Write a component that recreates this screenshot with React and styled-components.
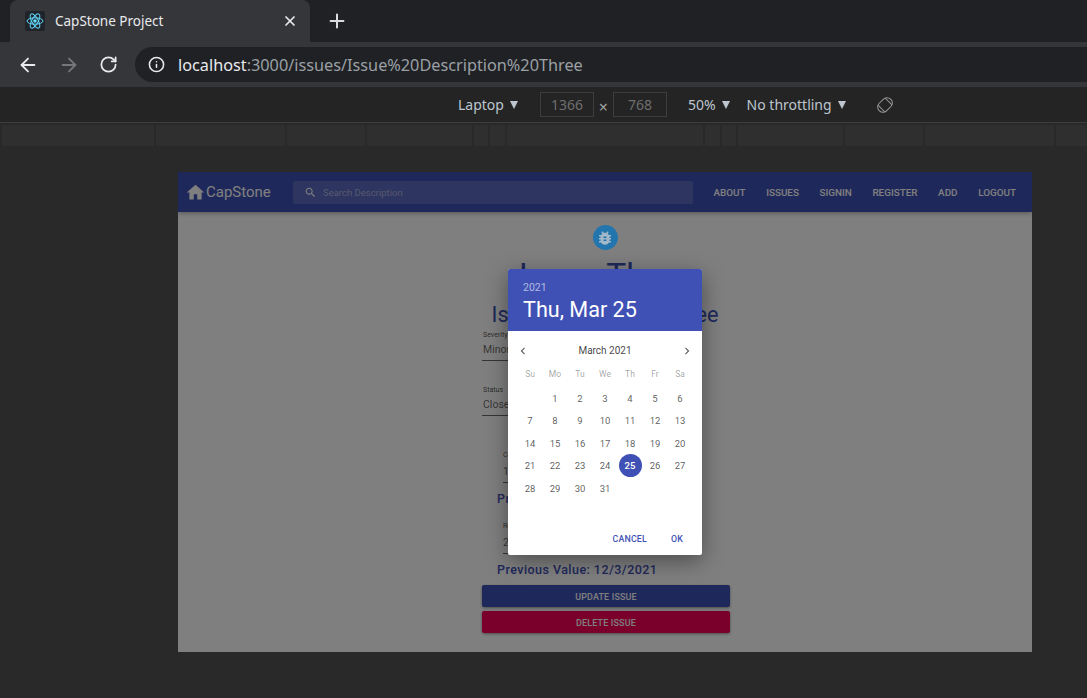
import React from "react";
import styled, { createGlobalStyle } from "styled-components";
import { ArrowLeft, ArrowRight, RotateCw, Info, X, Plus } from "lucide-react";

const rulerWidths = [152, 129, 78, 105, 14, 15, 196, 15, 14, 105, 78, 129, 31];
const navLinks = ["About", "Issues", "Signin", "Register", "Add", "Logout"];
const weekDays = ["Su", "Mo", "Tu", "We", "Th", "Fr", "Sa"];
const leadingBlanks = 1;
const daysInMonth = 31;
const selectedDay = 25;

function App() {
  const cells = [
    ...Array(leadingBlanks).fill(null),
    ...Array.from({ length: daysInMonth }, (_, i) => i + 1),
  ];

  return (
    <Screen>
      <GlobalStyle />
      <TabStrip>
        <Tab>
          <Favicon>
            <svg width="20" height="20" viewBox="0 0 20 20" fill="none" stroke="#61dafb" strokeWidth="1">
              <circle cx="10" cy="10" r="1.8" fill="#61dafb" stroke="none" />
              <ellipse cx="10" cy="10" rx="8" ry="3.2" />
              <ellipse cx="10" cy="10" rx="8" ry="3.2" transform="rotate(60 10 10)" />
              <ellipse cx="10" cy="10" rx="8" ry="3.2" transform="rotate(120 10 10)" />
            </svg>
          </Favicon>
          <TabTitle>CapStone Project</TabTitle>
          <X size={16} strokeWidth={2.6} color="#e8eaed" />
        </Tab>
        <NewTab>
          <Plus size={22} strokeWidth={2.2} color="#dadce0" />
        </NewTab>
      </TabStrip>

      <Toolbar>
        <ArrowLeft size={22} strokeWidth={2} color="#e8eaed" />
        <ArrowRight size={22} strokeWidth={2} color="#75777b" />
        <RotateCw size={19} strokeWidth={2.2} color="#e8eaed" />
        <UrlPill>
          <Info size={17} strokeWidth={2.2} color="#e8eaed" />
          <Url>
            <strong>localhost</strong>:3000/issues/Issue%20Description%20Three
          </Url>
        </UrlPill>
      </Toolbar>

      <DeviceBar>
        <DeviceLabel>Laptop</DeviceLabel>
        <Caret />
        <SizeBox>1366</SizeBox>
        <Times>×</Times>
        <SizeBox>768</SizeBox>
        <DeviceLabel $left={21}>50%</DeviceLabel>
        <Caret />
        <DeviceLabel $left={17}>No throttling</DeviceLabel>
        <Caret />
        <RotateIcon>
          <svg width="18" height="18" viewBox="0 0 18 18" fill="none" stroke="#9a9a9a" strokeWidth="1">
            <g transform="rotate(45 9 9)">
              <rect x="3.75" y="0.9" width="10.5" height="16.2" rx="5" />
              <path d="M4.1 4 13.9 4M4.1 14 13.9 14" />
            </g>
          </svg>
        </RotateIcon>
      </DeviceBar>

      <Ruler>
        {rulerWidths.map((w, i) => (
          <RulerSegment key={i} $width={w} />
        ))}
      </Ruler>

      <Viewport>
        <Page>
          <Navbar>
            <Brand>
              <svg width="21" height="21" viewBox="0 0 24 24" fill="#fff">
                <path d="M10 20v-6h4v6h5v-8h3L12 3 2 12h3v8z" />
              </svg>
              CapStone
            </Brand>
            <SearchBox>
              <svg width="13" height="13" viewBox="0 0 24 24" fill="#fff">
                <path d="M15.5 14h-.79l-.28-.27C15.41 12.59 16 11.11 16 9.5 16 5.91 13.09 3 9.5 3S3 5.91 3 9.5 5.91 16 9.5 16c1.61 0 3.09-.59 4.23-1.57l.27.28v.79l5 4.99L20.49 19l-4.99-5zm-6 0C7.01 14 5 11.99 5 9.5S7.01 5 9.5 5 14 7.01 14 9.5 11.99 14 9.5 14z" />
              </svg>
              <SearchHint>Search Description</SearchHint>
            </SearchBox>
            <NavLinks>
              {navLinks.map((l) => (
                <NavLink key={l}>{l}</NavLink>
              ))}
            </NavLinks>
          </Navbar>

          <Content>
            <BugAvatar>
              <svg width="18" height="18" viewBox="0 0 24 24" fill="#a3b8c8">
                <path d="M20 8h-2.81c-.45-.78-1.07-1.45-1.82-1.96L17 4.41 15.59 3l-2.17 2.17C12.96 5.06 12.49 5 12 5c-.49 0-.96.06-1.41.17L8.41 3 7 4.41l1.62 1.63C7.88 6.55 7.26 7.22 6.81 8H4v2h2.09c-.05.33-.09.66-.09 1v1H4v2h2v1c0 .34.04.67.09 1H4v2h2.81c1.04 1.79 2.97 3 5.19 3s4.15-1.21 5.19-3H20v-2h-2.09c.05-.33.09-.66.09-1v-1h2v-2h-2v-1c0-.34-.04-.67-.09-1H20V8zm-6 8h-4v-2h4v2zm0-4h-4v-2h4v2z" />
              </svg>
            </BugAvatar>
            <Title>Issue Three</Title>
            <Subtitle>Issue Description Three</Subtitle>

            <Form>
              <SelectField>
                <FieldLabel>Severity</FieldLabel>
                <FieldValue>Minor</FieldValue>
              </SelectField>
              <SelectField $top={25}>
                <FieldLabel>Status</FieldLabel>
                <FieldValue>Closed</FieldValue>
              </SelectField>
              <DateGroup $top={35}>
                <DateField>
                  <FieldLabel>Created Date</FieldLabel>
                  <FieldValue>12/3/2021</FieldValue>
                </DateField>
                <PreviousValue>Previous Value: 12/3/2021</PreviousValue>
              </DateGroup>
              <DateGroup $top={15}>
                <DateField>
                  <FieldLabel>Resolved Date</FieldLabel>
                  <FieldValue>25/3/2021</FieldValue>
                </DateField>
                <PreviousValue>Previous Value: 12/3/2021</PreviousValue>
              </DateGroup>
              <ActionButton $bg="#3f51b5" $top={7}>Update Issue</ActionButton>
              <ActionButton $bg="#f50057" $top={4}>Delete Issue</ActionButton>
            </Form>
          </Content>

          <Backdrop>
            <Dialog>
              <DialogHeader>
                <YearText>2021</YearText>
                <DateText>Thu, Mar 25</DateText>
              </DialogHeader>
              <DialogBody>
                <MonthRow>
                  <svg width="14" height="14" viewBox="0 0 24 24" fill="#5f5f5f">
                    <path d="M15.41 7.41L14 6l-6 6 6 6 1.41-1.41L10.83 12z" />
                  </svg>
                  <MonthName>March 2021</MonthName>
                  <svg width="14" height="14" viewBox="0 0 24 24" fill="#5f5f5f">
                    <path d="M10 6L8.59 7.41 13.17 12l-4.58 4.59L10 18l6-6z" />
                  </svg>
                </MonthRow>
                <DayGrid>
                  {weekDays.map((d) => (
                    <WeekDay key={d}>{d}</WeekDay>
                  ))}
                </DayGrid>
                <DayGrid $top={6}>
                  {cells.map((d, i) => (
                    <Day key={i}>
                      {d && <DayNumber $selected={d === selectedDay}>{d}</DayNumber>}
                    </Day>
                  ))}
                </DayGrid>
              </DialogBody>
              <DialogActions>
                <TextButton>Cancel</TextButton>
                <TextButton>OK</TextButton>
              </DialogActions>
            </Dialog>
          </Backdrop>
        </Page>
      </Viewport>
    </Screen>
  );
}

const GlobalStyle = createGlobalStyle`
  html, body {
    margin: 0;
    height: 100%;
    background: #292929;
    overflow: hidden;
  }
  * {
    box-sizing: border-box;
  }
`;

const Screen = styled.div`
  width: 1087px;
  height: 698px;
  display: flex;
  flex-direction: column;
  background: #292929;
  font-family: "Noto Sans", "Open Sans", sans-serif;
  overflow: hidden;
`;

const TabStrip = styled.div`
  height: 42px;
  flex-shrink: 0;
  display: flex;
  align-items: flex-end;
  padding-left: 10px;
  background: #202124;
`;

const Tab = styled.div`
  width: 300px;
  height: 42px;
  display: flex;
  align-items: center;
  padding: 0 12px 0 15px;
  background: #35363a;
  border-radius: 8px 8px 0 0;
`;

const Favicon = styled.div`
  width: 20px;
  height: 20px;
  margin-right: 10px;
  background: #20232a;
  border-radius: 2px;
  display: flex;
`;

const TabTitle = styled.span`
  flex: 1;
  font-size: 13.5px;
  color: #e8eaed;
`;

const NewTab = styled.div`
  height: 42px;
  display: flex;
  align-items: center;
  margin-left: 16px;
`;

const Toolbar = styled.div`
  height: 45px;
  flex-shrink: 0;
  display: flex;
  align-items: center;
  gap: 19px;
  padding: 0 0 0 17px;
  background: #35363a;
`;

const UrlPill = styled.div`
  flex: 1;
  height: 35px;
  margin-left: -2px;
  display: flex;
  align-items: center;
  gap: 13px;
  padding-left: 13px;
  background: #202124;
  border-radius: 18px 0 0 18px;
`;

const Url = styled.span`
  font-size: 16.25px;
  color: #9aa0a6;

  strong {
    font-weight: 400;
    color: #e8eaed;
  }
`;

const DeviceBar = styled.div`
  height: 36px;
  flex-shrink: 0;
  display: flex;
  align-items: center;
  padding-left: 458px;
  background: #242424;
  border-bottom: 1px solid #3d3d3d;
`;

const DeviceLabel = styled.span`
  margin-left: ${(p) => p.$left || 0}px;
  font-size: 14px;
  color: #bdc6cf;
`;

const Caret = styled.span`
  width: 0;
  height: 0;
  margin: 0 0 0 6px;
  border-left: 4.5px solid transparent;
  border-right: 4.5px solid transparent;
  border-top: 8px solid #bdc6cf;
`;

const SizeBox = styled.div`
  width: 54px;
  height: 25px;
  margin-left: 0;
  display: flex;
  align-items: center;
  justify-content: center;
  border: 1px solid #3d3d3d;
  font-size: 14px;
  color: #6e6e6e;

  &:first-of-type {
    margin-left: 22px;
  }
`;

const Times = styled.span`
  width: 19px;
  text-align: center;
  margin-top: 5px;
  font-size: 16px;
  color: #a0a0a0;
`;

const RotateIcon = styled.div`
  display: flex;
  margin-left: 30px;
`;

const Ruler = styled.div`
  height: 23px;
  flex-shrink: 0;
  display: flex;
  gap: 2px;
  padding: 2px 0 0 2px;
  overflow: hidden;
`;

const RulerSegment = styled.div`
  width: ${(p) => p.$width}px;
  flex-shrink: 0;
  background: #2f2f2f;
`;

const Viewport = styled.div`
  flex: 1;
  padding: 26px 55px 0 178px;
`;

const Page = styled.div`
  position: relative;
  width: 854px;
  height: 480px;
  background: #fff;
  overflow: hidden;
  font-family: Roboto, sans-serif;
`;

const Navbar = styled.header`
  height: 40px;
  display: flex;
  align-items: center;
  padding: 0 16px 0 7px;
  background: #3f51b5;
  color: #fff;
  box-shadow: 0 1px 5px rgba(0, 0, 0, 0.35);
`;

const Brand = styled.div`
  width: 108px;
  display: flex;
  align-items: center;
  font-size: 15px;
`;

const SearchBox = styled.div`
  width: 400px;
  height: 23px;
  display: flex;
  align-items: center;
  gap: 6px;
  padding-left: 11px;
  background: rgba(255, 255, 255, 0.15);
  border-radius: 2px;
`;

const SearchHint = styled.span`
  font-size: 9.5px;
  color: rgba(255, 255, 255, 0.5);
`;

const NavLinks = styled.nav`
  margin-left: auto;
  display: flex;
  gap: 20.6px;
`;

const NavLink = styled.span`
  font-size: 9.9px;
  font-weight: 500;
  text-transform: uppercase;
`;

const Content = styled.main`
  display: flex;
  flex-direction: column;
  align-items: center;
  color: #3f51b5;
`;

/* sits above the backdrop in the reference, it is not dimmed */
const BugAvatar = styled.div`
  position: relative;
  z-index: 2;
  width: 25px;
  height: 25px;
  margin-top: 13px;
  display: flex;
  align-items: center;
  justify-content: center;
  border-radius: 50%;
  background: #2376ad;
`;

const Title = styled.h1`
  margin: 6px 0 0;
  font-size: 33.5px;
  line-height: 40px;
  font-weight: 400;
  color: #3f51b5;
`;

const Subtitle = styled.h2`
  margin: 4px 0 0;
  font-size: 21.7px;
  line-height: 30px;
  font-weight: 400;
  color: #3f51b5;
`;

const Form = styled.form`
  width: 248px;
  margin: 1px 0 0 2px;
  display: flex;
  flex-direction: column;
`;

const SelectField = styled.div`
  width: 190px;
  height: 30px;
  margin-top: ${(p) => p.$top || 0}px;
  padding-left: 1px;
  border-bottom: 1px solid #6a6a6a;
`;

const FieldLabel = styled.div`
  font-size: 7px;
  line-height: 9px;
  color: rgba(0, 0, 0, 0.7);
`;

const FieldValue = styled.div`
  margin-top: 3px;
  font-size: 10.5px;
  line-height: 13px;
  color: rgba(0, 0, 0, 0.6);
`;

const DateGroup = styled.div`
  margin-top: ${(p) => p.$top}px;
  padding-left: 15px;
`;

const DateField = styled.div`
  margin-left: 6px;
  width: 190px;
  height: 32px;
  border-bottom: 1px solid #6a6a6a;

  ${FieldValue} {
    margin-top: 5px;
  }
`;

const PreviousValue = styled.div`
  margin-top: 8px;
  font-size: 12.5px;
  line-height: 16px;
  font-weight: 500;
  letter-spacing: 0.45px;
  color: #3f51b5;
`;

const ActionButton = styled.button`
  height: 22px;
  margin-top: ${(p) => p.$top}px;
  padding: 0 0 0 0;
  line-height: 24px;
  border: none;
  border-radius: 2px;
  background: ${(p) => p.$bg};
  color: #fff;
  font-family: Roboto, sans-serif;
  font-size: 8.9px;
  font-weight: 500;
  letter-spacing: 0.2px;
  text-transform: uppercase;
  box-shadow: 0 1px 3px rgba(0, 0, 0, 0.4);
`;

const Backdrop = styled.div`
  position: absolute;
  inset: 0;
  display: flex;
  align-items: center;
  justify-content: center;
  background: rgba(0, 0, 0, 0.5);
`;

const Dialog = styled.div`
  width: 194px;
  height: 286px;
  display: flex;
  flex-direction: column;
  border-radius: 2px;
  overflow: hidden;
  background: #fff;
  box-shadow: 0 6px 22px rgba(0, 0, 0, 0.4);
`;

const DialogHeader = styled.div`
  height: 62px;
  padding: 12px 15px 0;
  background: #3f51b5;
  color: #fff;
`;

const YearText = styled.div`
  font-size: 10.5px;
  line-height: 13px;
  color: rgba(255, 255, 255, 0.6);
`;

const DateText = styled.div`
  margin-top: 1px;
  font-size: 21.6px;
  line-height: 29px;
`;

const DialogBody = styled.div`
  flex: 1;
  padding-top: 13px;
`;

const MonthRow = styled.div`
  height: 13px;
  display: flex;
  align-items: center;
  justify-content: space-between;
  padding: 0 8px;
`;

const MonthName = styled.span`
  font-size: 10px;
  color: rgba(0, 0, 0, 0.75);
`;

const DayGrid = styled.div`
  display: grid;
  grid-template-columns: repeat(7, 25px);
  justify-content: center;
  margin-top: ${(p) => p.$top ?? 11}px;
`;

const WeekDay = styled.span`
  height: 13px;
  line-height: 13px;
  text-align: center;
  font-size: 8.5px;
  color: rgba(0, 0, 0, 0.38);
`;

const Day = styled.div`
  height: 22.5px;
  display: flex;
  align-items: center;
  justify-content: center;
`;

const DayNumber = styled.span`
  width: 23px;
  height: 23px;
  display: flex;
  align-items: center;
  justify-content: center;
  border-radius: 50%;
  font-size: 9.5px;
  font-weight: ${(p) => (p.$selected ? 500 : 400)};
  color: ${(p) => (p.$selected ? "#fff" : "rgba(0, 0, 0, 0.66)")};
  background: ${(p) => (p.$selected ? "#3f51b5" : "transparent")};
`;

const DialogActions = styled.div`
  height: 24px;
  display: flex;
  align-items: flex-start;
  justify-content: flex-end;
  gap: 24px;
  padding: 2px 19px 0 0;
`;

const TextButton = styled.span`
  font-size: 8.8px;
  line-height: 12px;
  font-weight: 500;
  letter-spacing: 0.2px;
  text-transform: uppercase;
  color: #3f51b5;
`;

export default App;
